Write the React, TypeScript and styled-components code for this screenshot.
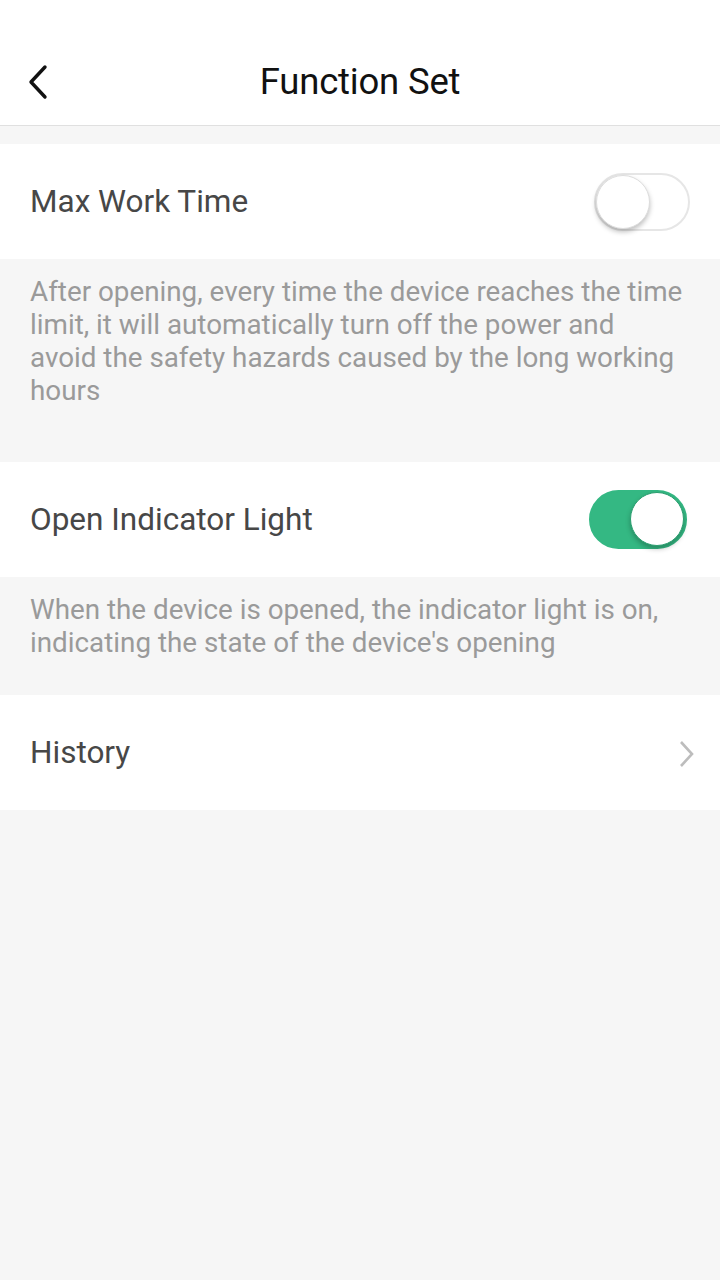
import React, {useState} from 'react';
import styled, {createGlobalStyle} from 'styled-components';

const GlobalStyle = createGlobalStyle`
    html, body {
        margin: 0;
        padding: 0;
        background: #f6f6f6;
        font-family: Roboto, "Noto Sans", sans-serif;
    }
`

function Switch({on, onClick}: {on: boolean, onClick: () => void}) {
    return (
        <Track $on={on} onClick={onClick}>
            <Knob $on={on}/>
        </Track>
    );
}

function App() {
    const [maxTime, setMaxTime] = useState(false);
    const [light, setLight] = useState(true);
    return (
        <Page>
            <GlobalStyle/>
            <Header>
                <BackButton>
                    <svg width="24" height="36" viewBox="0 0 24 36">
                        <path d="M19 3 L5 18 L19 33" fill="none" stroke="#111" strokeWidth="3.4"
                              strokeLinecap="round" strokeLinejoin="round"/>
                    </svg>
                </BackButton>
                <Title>Function Set</Title>
            </Header>
            <Gap/>
            <Row>
                <Label>Max Work Time</Label>
                <Switch on={maxTime} onClick={() => setMaxTime(!maxTime)}/>
            </Row>
            <Note $tall>
                After opening, every time the device reaches the time limit, it will automatically turn off the power and avoid the safety hazards caused by the long working hours
            </Note>
            <Row>
                <Label>Open Indicator Light</Label>
                <Switch on={light} onClick={() => setLight(!light)}/>
            </Row>
            <Note>
                When the device is opened, the indicator light is on, indicating the state of the device's opening
            </Note>
            <Row>
                <Label>History</Label>
                <Chevron width="18" height="28" viewBox="0 0 18 28">
                    <path d="M3 2 L14 14 L3 26" fill="none" stroke="#bdbdbd" strokeWidth="2.6"/>
                </Chevron>
            </Row>
        </Page>
    );
}

const Page = styled.div`
    min-height: 1280px;
    background: #f6f6f6;
    display: flex;
    flex-direction: column;
`
const Header = styled.div`
    height: 126px;
    background: #fff;
    border-bottom: 1px solid #e0e0e0;
    display: flex;
    align-items: center;
    justify-content: center;
    position: relative;
    padding-top: 38px;
    box-sizing: border-box;
`
const BackButton = styled.div`
    position: absolute;
    left: 26px;
    top: 64px;
    display: flex;
`
const Title = styled.div`
    font-size: 36.5px;
    color: #111;
    letter-spacing: -0.2px;
`
const Gap = styled.div`
    height: 18px;
`
const Row = styled.div`
    height: 115px;
    background: #fff;
    display: flex;
    align-items: center;
    justify-content: space-between;
    padding: 0 30px;
`
const Label = styled.div`
    font-size: 31.5px;
    color: #474747;
`
const Chevron = styled.svg`
    margin-right: -6px;
    margin-top: 2px;
`
const Note = styled.div<{$tall?: boolean}>`
    padding: 16px 36px ${p => p.$tall ? '55px' : '36px'} 30px;
    font-size: 27.8px;
    line-height: 33px;
    color: #9a9a9a;
`
const Track = styled.div<{$on: boolean}>`
    width: ${p => p.$on ? '98px' : '96px'};
    height: ${p => p.$on ? '59px' : '58px'};
    border-radius: 30px;
    box-sizing: border-box;
    background: ${p => p.$on ? '#34b883' : '#fff'};
    border: 2px solid ${p => p.$on ? '#34b883' : '#e6e6e6'};
    position: relative;
    cursor: pointer;
    margin-right: ${p => p.$on ? '3px' : '0'};
`
const Knob = styled.div<{$on: boolean}>`
    position: absolute;
    top: 0;
    left: ${p => p.$on ? '39px' : '0'};
    width: 54px;
    height: 54px;
    border-radius: 50%;
    background: #fff;
    border: 1px solid ${p => p.$on ? '#2a9e6f' : '#ddd'};
    box-sizing: border-box;
    box-shadow: 0 3px 5px rgba(0, 0, 0, 0.25);
`
export default App;
